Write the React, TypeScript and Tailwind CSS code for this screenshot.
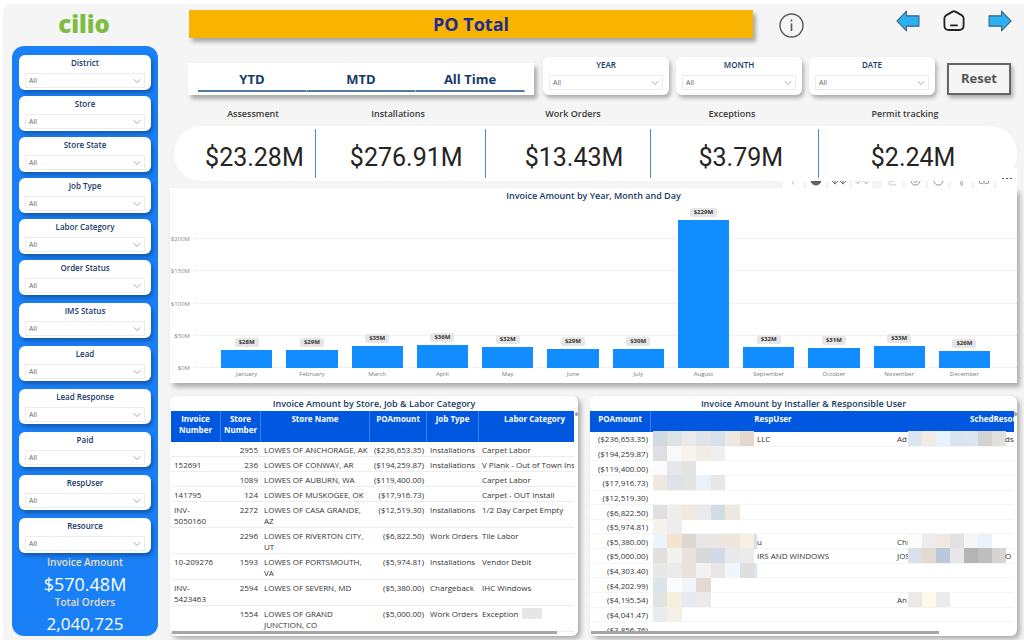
import { useState } from 'react';
import { ArrowDown, ChevronDown, Circle, CircleArrowDown, Filter, LineChart, Smile, SquareSplitHorizontal, ArrowUp } from 'lucide-react';

const topSlicers = ['District', 'Store', 'Store State', 'Job Type', 'Labor Category', 'Order Status'];
const bottomSlicers = ['IMS Status', 'Lead', 'Lead Response', 'Paid', 'RespUser', 'Resource'];
const dateSlicers = ['YEAR', 'MONTH', 'DATE'];
const periods = ['YTD', 'MTD', 'All Time'];

const kpis = [
  { label: 'Assessment', value: '$23.28M' },
  { label: 'Installations', value: '$276.91M' },
  { label: 'Work Orders', value: '$13.43M' },
  { label: 'Exceptions', value: '$3.79M' },
  { label: 'Permit tracking', value: '$2.24M' },
];

// top of the plot area, in millions
const CHART_MAX = 256;
const ticks = [0, 50, 100, 150, 200];
const months = [
  { name: 'January', value: 28 },
  { name: 'February', value: 28.7 },
  { name: 'March', value: 34.6 },
  { name: 'April', value: 35.8 },
  { name: 'May', value: 32 },
  { name: 'June', value: 28.8 },
  { name: 'July', value: 30 },
  { name: 'August', value: 229 },
  { name: 'September', value: 32.2 },
  { name: 'October', value: 31.3 },
  { name: 'November', value: 33.4 },
  { name: 'December', value: 26.2 },
];

const storeRows = [
  { invoice: '', store: '2955', name: 'LOWES OF ANCHORAGE, AK', amount: '($236,653.35)', job: 'Installations', labor: 'Carpet Labor' },
  { invoice: '152691', store: '236', name: 'LOWES OF CONWAY, AR', amount: '($194,259.87)', job: 'Installations', labor: 'V Plank - Out of Town Ins' },
  { invoice: '', store: '1089', name: 'LOWES OF AUBURN, WA', amount: '($119,400.00)', job: '', labor: 'Carpet Labor' },
  { invoice: '141795', store: '124', name: 'LOWES OF MUSKOGEE, OK', amount: '($17,916.73)', job: '', labor: 'Carpet - OUT Install' },
  { invoice: 'INV-\n5050160', store: '2272', name: 'LOWES OF CASA GRANDE,\nAZ', amount: '($12,519.30)', job: 'Installations', labor: '1/2 Day Carpet Empty' },
  { invoice: '', store: '2296', name: 'LOWES OF RIVERTON CITY,\nUT', amount: '($6,822.50)', job: 'Work Orders', labor: 'Tile Labor' },
  { invoice: '10-209276', store: '1593', name: 'LOWES OF PORTSMOUTH,\nVA', amount: '($5,974.81)', job: 'Installations', labor: 'Vendor Debit' },
  { invoice: 'INV-\n5423463', store: '2594', name: 'LOWES OF SEVERN, MD', amount: '($5,380.00)', job: 'Chargeback', labor: 'IHC Windows' },
  { invoice: '', store: '1554', name: 'LOWES OF GRAND\nJUNCTION, CO', amount: '($5,000.00)', job: 'Work Orders', labor: 'Exception', masked: true },
];

// names are masked, each entry is one tile of the mask
const userRows = [
  {
    amount: '($236,653.35)',
    mask: ['bg-[#d0dae3]', 'bg-[#dde2e5]', 'bg-[#e8eaec]', 'bg-[#dfe4e9]', 'bg-[#d8e1eb]', 'bg-[#eee8e0]', 'bg-[#e3d8cc]'],
    user: 'LLC',
    sched: 'Ad',
    schedMask: ['bg-[#dde6f0]', 'bg-[#f0ebe3]', 'bg-[#e6f2fc]', 'bg-[#dae4ee]', 'bg-[#dce4ef]', 'bg-[#d2d2d3]', 'bg-[#e2e0df]'],
    schedEnd: 'ds',
  },
  { amount: '($194,259.87)', mask: ['bg-[#dfdfe1]', 'bg-[#f9f9f7]', 'bg-[#f8f4e9]', 'bg-[#f1ece4]', 'bg-[#efeff0]'] },
  { amount: '($119,400.00)', mask: ['bg-[#f9fbfd]', 'bg-[#e6e7e8]', 'bg-[#e2e4e4]'] },
  { amount: '($17,916.73)', mask: ['bg-[#eee8e1]', 'bg-[#dfe2e6]', 'bg-[#e3e3e2]', 'bg-[#eaf2f9]', 'bg-[#e8e7e6]'] },
  { amount: '($12,519.30)' },
  { amount: '($6,822.50)', mask: ['bg-[#e0e0e1]', 'bg-[#eeedea]', 'bg-[#f1e9dd]', 'bg-[#e8eaec]', 'bg-[#d2dce5]', 'bg-[#eee8e1]'] },
  { amount: '($5,974.81)', mask: ['bg-[#f4f3ec]', 'bg-[#ededee]'] },
  {
    amount: '($5,380.00)',
    mask: ['bg-[#ecf5fd]', 'bg-[#f3e4d0]', 'bg-[#dcd8d1]', 'bg-[#e9e7e4]', 'bg-[#ece8e1]', 'bg-[#efe7de]', 'bg-[#f6f0df]', 'bg-[#d5e0eb]'],
    user: 'u',
    sched: 'Chi',
    schedMask: ['bg-[#fbfcfc]', 'bg-[#eeecea]', 'bg-[#f0e9e0]', 'bg-[#e1e1e2]', 'bg-[#f6f6f7]', 'bg-[#eaf3fa]'],
  },
  {
    amount: '($5,000.00)',
    mask: ['bg-[#e3dfde]', 'bg-[#f2f1eb]', 'bg-[#e9e2dc]', 'bg-[#d8d9da]', 'bg-[#d0dbe5]', 'bg-[#e8e9eb]', 'bg-[#ebebea]'],
    user: 'IRS AND WINDOWS',
    sched: 'JOS',
    schedMask: ['bg-[#d8e1ea]', 'bg-[#e2d9cf]', 'bg-[#bbc8da]', 'bg-[#e6e7e8]', 'bg-[#b5b4b4]', 'bg-[#bebebe]', 'bg-[#d7d4d1]'],
    schedEnd: 'O',
  },
  { amount: '($4,303.40)', mask: ['bg-[#e8e8e7]', 'bg-[#ebecea]', 'bg-[#e9e2dc]', 'bg-[#f2f2f2]', 'bg-[#e9e7e3]', 'bg-[#f0f6fb]', 'bg-[#dedede]', 'bg-[#dbe4ef]'] },
  { amount: '($4,202.99)', mask: ['bg-[#dce3e9]', 'bg-[#f9fcfe]', 'bg-[#f0f5f9]', 'bg-[#e3dad3]'] },
  {
    amount: '($4,195.54)',
    mask: ['bg-[#e3e3e2]', 'bg-[#f5efde]', 'bg-[#e5eaf0]', 'bg-[#ebebeb]'],
    sched: 'An',
    schedMask: ['bg-[#edeae3]', 'bg-[#fdf9eb]', 'bg-[#ecebe9]'],
  },
  { amount: '($4,041.47)', mask: ['bg-[#e9ebee]', 'bg-[#f3f0e5]'] },
  { amount: '($3,856.76)' },
];

function Slicer({ label }: { label: string }) {
  const id = `slicer-${label.toLowerCase().replace(' ', '-')}`;
  return (
    <div className="flex flex-col rounded-md bg-white px-1.5 pt-0.5 pb-0.5 shadow-[2px_3px_4px_rgba(0,0,0,0.3)]">
      <label htmlFor={id} className="text-center text-[8px] leading-3 font-semibold text-[#163a68]">
        {label}
      </label>
      <div className="relative mt-1 flex">
        <select
          id={id}
          className="h-[15px] w-full appearance-none border border-[#ececec] bg-white pl-[3px] text-[7px] leading-3 text-[#666]"
        >
          <option>All</option>
        </select>
        <ChevronDown className="pointer-events-none absolute top-0.5 right-0.5 text-[#8a8a8a]" size={12} strokeWidth={1.5} />
      </div>
    </div>
  );
}

function Mask({ tiles, width }: { tiles?: string[]; width: string }) {
  return (
    <span className={`grid h-[15px] shrink-0 grid-cols-[repeat(7,1fr)_3px] ${width}`}>
      {tiles?.map((tile, i) => (
        <span key={i} className={tile} />
      ))}
    </span>
  );
}

function ArrowIcon({ flip }: { flip?: boolean }) {
  return (
    <svg width="24" height="22" viewBox="0 0 24 20" preserveAspectRatio="none" className={flip ? 'rotate-180' : ''}>
      <path d="M1 10 L10.5 1 V5.3 H23 V14.7 H10.5 V19 Z" fill="#2bb1f2" stroke="#3d5f80" strokeWidth="1" strokeLinejoin="round" />
    </svg>
  );
}

function Toolbar() {
  const box = 'flex w-5 items-end justify-center bg-white pb-0.5';
  return (
    <div className="relative flex h-[7px] justify-end gap-[3px] pr-[23px] text-[#555]">
      <div className="flex items-end gap-[3px] overflow-hidden">
        <span className={box}><ArrowUp size={10} strokeWidth={2} className="shrink-0 text-[#aaa]" /></span>
        <span className={box}><CircleArrowDown size={12} className="shrink-0 fill-[#666]" /></span>
        <span className={box}><ArrowDown size={10} strokeWidth={2} className="-mr-0.5 shrink-0" /><ArrowDown size={10} strokeWidth={2} className="shrink-0" /></span>
        <span className={box}><ArrowDown size={10} className="-mr-0.5 shrink-0 text-[#bbb]" /><ArrowDown size={10} className="shrink-0 text-[#bbb]" /></span>
        <span className="w-1" />
        <span className={box}><LineChart size={9} className="shrink-0 text-[#bbb]" /></span>
        <span className={box}><Smile size={11} className="shrink-0 text-[#888]" /></span>
        <span className={box}><Circle size={11} className="shrink-0 text-[#888]" /></span>
        <span className={box}><Filter size={9} className="shrink-0 text-[#888]" /></span>
        <span className={box}><SquareSplitHorizontal size={12} className="shrink-0 text-[#888]" /></span>
      </div>
      <button aria-label="More options" className="absolute right-0 bottom-0 flex h-5 w-5 items-center justify-center gap-0.5 bg-white">
        <span className="h-px w-0.5 bg-[#555]" />
        <span className="h-px w-0.5 bg-[#555]" />
        <span className="h-px w-0.5 bg-[#555]" />
      </button>
    </div>
  );
}

function InvoiceChart() {
  return (
    <section className="flex flex-col bg-white shadow-[3px_4px_5px_rgba(0,0,0,0.3)]">
      <h2 className="text-center text-[9px] leading-[15px] font-semibold text-[#163a68]">Invoice Amount by Year, Month and Day</h2>
      <div className="flex h-[165px] text-[6px] text-[#888]">
        <div className="relative w-6">
          {ticks.map(t => (
            <span key={t} className="absolute right-1 translate-y-1/2 leading-none" style={{ bottom: `${(t / CHART_MAX) * 100}%` }}>
              ${t}M
            </span>
          ))}
        </div>
        <div className="relative flex flex-1 items-end pr-5 pl-5">
          {ticks.map(t => (
            <span
              key={t}
              className="absolute right-0 left-0 border-t border-dotted border-[#e4e4e4]"
              style={{ bottom: `${(t / CHART_MAX) * 100}%` }}
            />
          ))}
          {months.map(m => (
            <div key={m.name} className="relative flex h-full flex-1 flex-col items-center justify-end px-[7px]">
              <span className="mb-[3px] rounded-xs bg-[#e6e6e6] px-1 text-[6px] leading-[9px] font-bold text-[#333]">
                ${Math.round(m.value)}M
              </span>
              <div className="w-full bg-[#118dff]" style={{ height: `${(m.value / CHART_MAX) * 100}%` }} />
            </div>
          ))}
        </div>
      </div>
      <div className="flex pr-5 pb-[3px] pl-11 text-center text-[6px] leading-3 text-[#777]">
        {months.map(m => (
          <span key={m.name} className="flex-1">{m.name}</span>
        ))}
      </div>
    </section>
  );
}

function StoreTable() {
  const th = 'border-r border-[#3c7fe8] px-[3px] pt-0.5 align-top font-bold';
  const td = 'border-b border-[#ededed] px-[3px] pt-0.5 pb-px align-top';
  return (
    <section className="relative h-[240px] overflow-hidden rounded-md bg-white px-px">
      <h2 className="text-center text-[9px] leading-[15px] font-semibold text-[#163a68]">Invoice Amount by Store, Job & Labor Category</h2>
      <div className="mr-[3px] overflow-hidden">
        <table className="w-full table-fixed border-separate border-spacing-0 text-[8px] whitespace-pre text-[#333]">
          <thead>
            <tr className="h-[31px] bg-[#0057e0] text-center leading-[11px] text-white">
              <th className={`${th} w-[50px]`}>{'Invoice\nNumber'}</th>
              <th className={`${th} w-10`}>{'Store\nNumber'}</th>
              <th className={`${th} w-[109px]`}>Store Name</th>
              <th className={`${th} w-[57px]`}>POAmount</th>
              <th className={`${th} w-[52px]`}>Job Type</th>
              <th className="pt-0.5 pl-4 align-top font-bold">Labor Category</th>
            </tr>
          </thead>
          <tbody className="leading-[11px]">
            {storeRows.map(row => (
              <tr key={row.store}>
                <td className={td}>{row.invoice}</td>
                <td className={`${td} text-right`}>{row.store}</td>
                <td className={td}>{row.name}</td>
                <td className={`${td} text-right`}>{row.amount}</td>
                <td className={td}>{row.job}</td>
                <td className={td}>
                  {row.labor}
                  {row.masked && <span className="ml-1 inline-block h-[11px] w-5 bg-[#e6e6e6] align-top" />}
                </td>
              </tr>
            ))}
          </tbody>
        </table>
      </div>
      <span className="absolute bottom-0.5 left-0.5 h-[3px] w-[385px] bg-[#a6a6a6]" />
      <span className="absolute top-4 right-0 h-1 w-[3px] rounded-full bg-[#a6a6a6]" />
    </section>
  );
}

function UserTable() {
  const td = 'border-b border-[#f4f4f4] p-0';
  return (
    <section className="relative h-[240px] overflow-hidden rounded-md bg-white">
      <h2 className="text-center text-[9px] leading-[15px] font-semibold text-[#163a68]">Invoice Amount by Installer & Responsible User</h2>
      <div className="mr-[3px] h-[221px] overflow-hidden">
        <table className="h-[226px] w-full table-fixed border-separate border-spacing-0 text-[8px] leading-[11px] whitespace-nowrap text-[#333]">
          <thead>
            <tr className="h-[21px] bg-[#0057e0] text-white">
              <th className="w-[61px] border-r border-[#3c7fe8] pt-0.5 align-top font-bold">POAmount</th>
              <th className="w-[244px] pt-0.5 align-top font-bold">RespUser</th>
              <th className="overflow-hidden pt-0.5 pl-[75px] text-left align-top font-bold">SchedResource</th>
            </tr>
          </thead>
          <tbody>
            {userRows.map(row => (
              <tr key={row.amount}>
                <td className={`${td} pr-[3px] text-right`}>{row.amount}</td>
                <td className={td}>
                  <div className="flex h-[13px] items-center pl-0.5">
                    <Mask tiles={row.mask} width="w-[104px]" />
                    {row.user}
                  </div>
                </td>
                <td className={td}>
                  <div className="flex h-[13px] items-center pl-0.5">
                    <span className="w-[11px] shrink-0">{row.sched}</span>
                    <Mask tiles={row.schedMask} width="w-[101px]" />
                    <span className="-ml-1">{row.schedEnd}</span>
                  </div>
                </td>
              </tr>
            ))}
          </tbody>
        </table>
      </div>
      <span className="absolute bottom-0.5 left-px h-[3px] w-[348px] bg-[#a6a6a6]" />
      <span className="absolute top-4 right-0 h-1 w-[3px] rounded-full bg-[#a6a6a6]" />
    </section>
  );
}

export default function App() {
  const [period, setPeriod] = useState('');

  return (
    <div className="min-h-screen bg-white pt-1 pl-[3px] font-['Open_Sans','Noto_Sans',sans-serif]">
      <div className="flex rounded-tl-lg bg-[#f5f5f5] pr-[7px] pb-1 pl-[9px]">
        <aside className="w-[146px] shrink-0">
          <div className="h-[42px] pr-0.5 text-center text-[24px] leading-10 font-extrabold text-[#7fbc42]">cilio</div>
          <div className="rounded-xl bg-[#1a80f8] pt-[9px] text-center">
            <div className="flex flex-col gap-2 px-[7px]">
              <div className="flex flex-col gap-1.5">
                {topSlicers.map(s => <Slicer key={s} label={s} />)}
              </div>
              {bottomSlicers.map(s => <Slicer key={s} label={s} />)}
            </div>
            <div className="mt-[3px] text-[10px] leading-3 font-semibold text-[#e3deb9]">Invoice Amount</div>
            <div className="mt-1 text-[18px] leading-6 text-white">$570.48M</div>
            <div className="text-[10px] leading-3 font-semibold text-[#e3deb9]">Total Orders</div>
            <div className="mt-1 text-[17px] leading-6 text-white">2,040,725</div>
          </div>
        </aside>

        <main className="min-w-0 flex-1 pl-3">
          <header className="flex h-[34px] items-start pt-1.5 pr-[5px] pl-[19px]">
            <h1 className="flex-1 bg-[#f8b400] text-center text-[18px] leading-7 font-bold text-[#1f2c8f] shadow-[3px_4px_4px_rgba(0,0,0,0.3)]">
              PO Total
            </h1>
            <button aria-label="Information" className="mt-[3px] ml-[26px]">
              <svg width="25" height="25" viewBox="0 0 25 25" fill="none" stroke="#5b5558">
                <circle cx="12.5" cy="12.5" r="11.5" strokeWidth="1.4" />
                <path d="M12.5 10.5 V18" strokeWidth="1.6" />
                <path d="M12.5 6.5 V8.5" strokeWidth="1.6" />
              </svg>
            </button>
            <nav className="ml-[92px] flex items-center gap-[22px]">
              <button aria-label="Back"><ArrowIcon /></button>
              <button aria-label="Home">
                <svg width="24" height="22" viewBox="0 0 24 22" fill="none" stroke="#222" strokeWidth="1.8" strokeLinecap="round" strokeLinejoin="round">
                  <path d="M10.6 1.6 Q12 0.9 13.4 1.6 L20 5.4 Q21.6 6.5 21.6 8.3 V15.5 Q21.6 20 17 20 H7 Q2.4 20 2.4 15.5 V8.3 Q2.4 6.5 4 5.4 Z" />
                  <path d="M9 15.4 H15" />
                </svg>
              </button>
              <button aria-label="Next"><ArrowIcon flip /></button>
            </nav>
          </header>

          <div className="mt-[19px] flex items-end pr-1.5 pl-[18px]">
            <div className="flex flex-1 bg-white pr-[9px] pb-[3px] pl-2.5 shadow-[3px_4px_4px_rgba(0,0,0,0.3)]">
              {periods.map(p => (
                <button
                  key={p}
                  aria-pressed={period === p}
                  onClick={() => setPeriod(p)}
                  className="flex-1 border-r border-b-2 border-r-white border-b-[#55799f] pt-1.5 text-[13px] leading-[21px] font-bold text-[#163a68]"
                >
                  {p}
                </button>
              ))}
            </div>
            <div className="mr-3 ml-[9px] grid grid-cols-[126px_126px_126px] gap-[7px]">
              {dateSlicers.map(s => (
                <div key={s} className="rounded-md bg-white pb-[3px] shadow-[2px_3px_4px_rgba(0,0,0,0.3)] *:shadow-none">
                  <Slicer label={s} />
                </div>
              ))}
            </div>
            <button className="h-8 w-16 border-2 border-[#666] bg-[#f5f5f5] text-[13px] font-bold text-[#555] shadow-[2px_3px_4px_rgba(0,0,0,0.3)]">
              Reset
            </button>
          </div>

          <div className="grid grid-cols-[136fr_154fr_196fr_122fr_224fr] pt-[13px] pb-1.5 pl-[15px] text-center text-[9px] leading-3 font-semibold text-[#3a3a3a]">
            {kpis.map(k => <span key={k.label}>{k.label}</span>)}
          </div>
          <div className="ml-1 grid grid-cols-[134fr_170fr_166fr_168fr_176fr] rounded-full bg-white py-[3px] pr-[22px] pl-2 text-center font-[Roboto,sans-serif] text-[25px] leading-[41px] text-[#252423]">
            {kpis.map(k => (
              <span key={k.label} className="border-r border-[#4a8fd0] pt-2 pl-3 last:border-r-0">{k.value}</span>
            ))}
          </div>

          <Toolbar />
          <InvoiceChart />

          <div className="mt-[13px] grid grid-cols-[408fr_427fr] gap-3 *:shadow-[3px_3px_5px_rgba(0,0,0,0.3)]">
            <StoreTable />
            <UserTable />
          </div>
        </main>
      </div>
    </div>
  );
}
